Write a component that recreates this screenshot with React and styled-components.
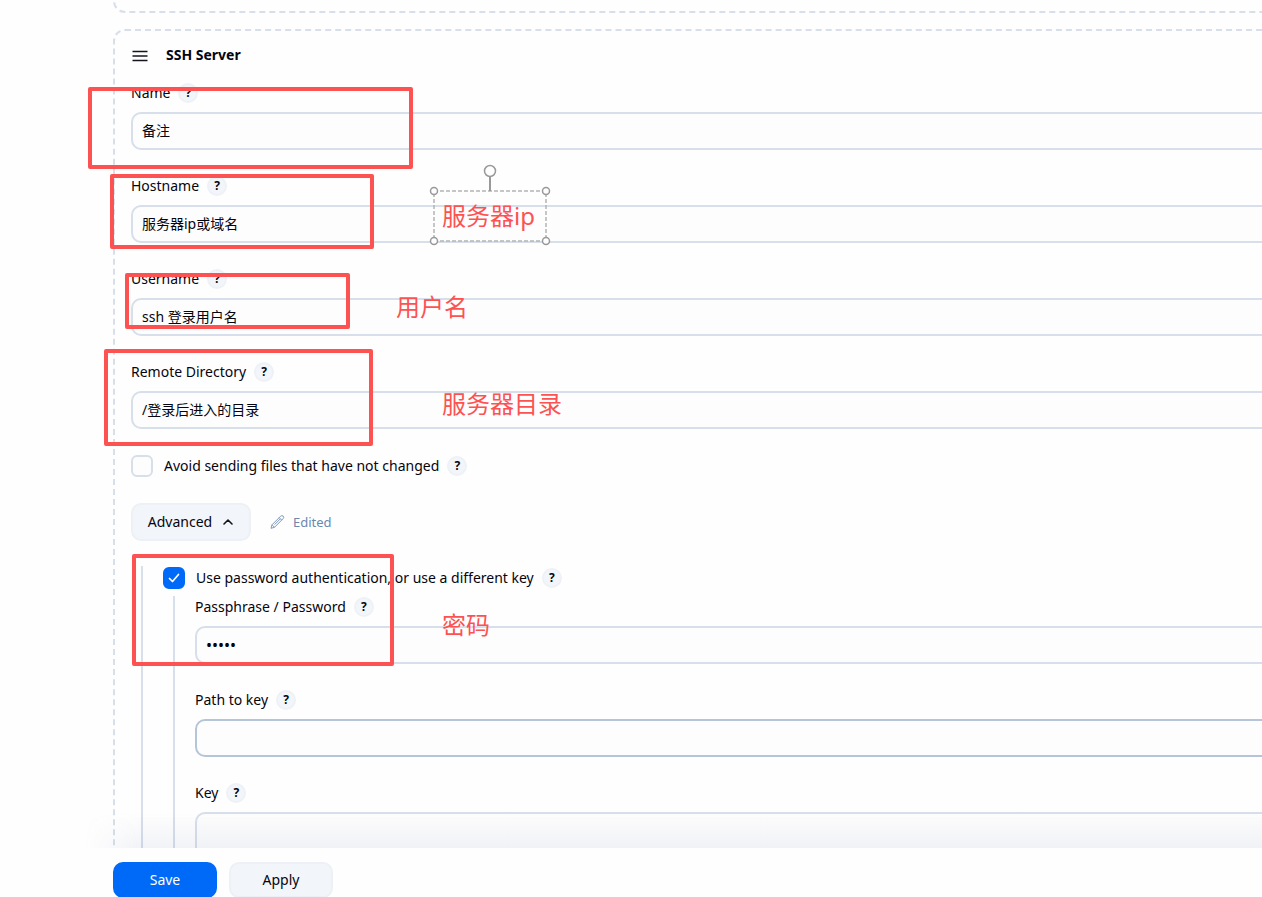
import React, { useState } from 'react';
import styled, { createGlobalStyle } from 'styled-components';

const GlobalStyle = createGlobalStyle`
  * {
    box-sizing: border-box;
  }
  body {
    margin: 0;
    background: #fefefe;
    color: #05050f;
    font-family: "Segoe UI", "Noto Sans", "Noto Sans CJK SC", sans-serif;
    font-size: 14px;
    line-height: 22px;
  }
  button, input, textarea {
    font: inherit;
    color: inherit;
  }
`

const Page = styled.div`
  position: relative;
  display: flex;
  flex-direction: column;
  height: 100vh;
  padding-left: 113px;
  overflow: hidden;
`

/* the form is wider than the window, so its right edge runs out of view */
const Content = styled.main`
  flex: 1;
  min-height: 0;
  margin-right: -40px;
`

const Chunk = styled.section`
  padding: 12px 16px;
  margin-bottom: 16px;
  border: 2px dashed #d6dfea;
  border-radius: 12px;
`

const PreviousChunk = styled(Chunk)`
  height: 60px;
  margin-top: -47px;
`

const ChunkHeader = styled.div`
  display: flex;
  align-items: center;
  gap: 17px;
  height: 24px;
  margin-bottom: 15px;
`

const ChunkTitle = styled.h2`
  margin: 0;
  font-size: 14px;
  font-weight: 700;
`

const DragHandle = styled.svg`
  width: 18px;
  height: 18px;
  fill: none;
  stroke: #14141f;
`

const Field = styled.div`
  margin-bottom: 25px;
`

const LabelRow = styled.div`
  display: flex;
  align-items: center;
  gap: 8px;
  height: 22px;
  margin-bottom: 8px;
`

const HelpButton = styled.button`
  display: grid;
  place-items: center;
  width: 20px;
  height: 20px;
  padding: 0;
  border: 2px solid #eef2f6;
  border-radius: 50%;
  background: #f2f5f9;
  font-size: 12px;
  font-weight: 700;
  line-height: 16px;
  cursor: pointer;
`

const TextInput = styled.input`
  display: block;
  width: 100%;
  height: 38px;
  padding: 0 9px 2px;
  border: 2px solid ${props => props.$active ? "#b6c4d8" : "#d6dfea"};
  border-radius: 10px;
  background: #fdfdfd;
  outline: none;
  &[type="password"] {
    padding-bottom: 0;
    font-size: 16px;
  }
`

const TextArea = styled.textarea`
  display: block;
  width: 100%;
  height: 120px;
  padding: 8px 10px;
  border: 2px solid #d6dfea;
  border-radius: 10px;
  background: #fdfdfd;
  outline: none;
  resize: none;
`

const CheckRow = styled.div`
  display: flex;
  align-items: center;
  gap: 8px;
  height: 24px;
  margin-bottom: ${props => props.$tight ? "6px" : "25px"};
`

const CheckLabel = styled.label`
  display: flex;
  align-items: center;
  gap: 11px;
`

const CheckMark = styled.span`
  display: grid;
  width: 22px;
  height: 22px;
  & > * {
    grid-area: 1 / 1;
  }
  svg {
    place-self: center;
    width: 12px;
    height: 12px;
    fill: none;
    stroke: white;
    stroke-width: 1.7;
    stroke-linecap: round;
    stroke-linejoin: round;
    pointer-events: none;
  }
`

const CheckInput = styled.input`
  appearance: none;
  width: 22px;
  height: 22px;
  margin: 0;
  border: 2px solid #d6dfea;
  border-radius: 6px;
  background: #fdfdfd;
  &:checked {
    border-color: #006af8;
    background: #006af8;
  }
`

const AdvancedRow = styled.div`
  display: flex;
  align-items: center;
  gap: 18px;
  margin-bottom: 25px;
`

const Button = styled.button`
  display: flex;
  align-items: center;
  justify-content: center;
  gap: 10px;
  height: ${props => props.$bar ? "36px" : "38px"};
  width: ${props => props.$bar ? "104px" : "120px"};
  padding: 0;
  border: 2px solid ${props => props.$primary ? "#006af8" : "#edf1f5"};
  border-radius: 10px;
  background: ${props => props.$primary ? "#006af8" : "#f2f5f9"};
  color: ${props => props.$primary ? "white" : "#05050f"};
  cursor: pointer;
  svg {
    width: 12px;
    height: 12px;
    fill: none;
    stroke: #14141f;
    stroke-width: 1.6;
    stroke-linecap: round;
    stroke-linejoin: round;
  }
`

const Edited = styled.span`
  display: flex;
  align-items: center;
  gap: 8px;
  color: #6b88ae;
  font-size: 13px;
  svg {
    width: 16px;
    height: 16px;
    fill: none;
    stroke: #7f99bd;
    stroke-linejoin: round;
  }
`

const Nested = styled.div`
  margin-left: 10px;
  padding-left: 20px;
  border-left: 2px solid #d6dfea;
`

const BottomBar = styled.footer`
  position: relative;
  display: flex;
  flex: none;
  gap: 12px;
  padding-top: 14px;
  margin-bottom: -1px;
  background: #fefefe;
  &::before {
    content: "";
    position: absolute;
    bottom: 100%;
    left: -28px;
    right: 0;
    height: 36px;
    background: linear-gradient(to top, rgba(100, 115, 165, 0.08), rgba(100, 115, 165, 0));
    mask-image: linear-gradient(to right, transparent, black 56px);
    pointer-events: none;
  }
`

const Markup = styled.div`
  position: absolute;
  inset: 0;
  pointer-events: none;
`

const RedBox = styled.div`
  position: absolute;
  left: ${props => props.$x}px;
  top: ${props => props.$y}px;
  width: ${props => props.$w}px;
  height: ${props => props.$h}px;
  border: 4px solid #fd5252;
  border-radius: 2px;
`

const RedNote = styled.span`
  position: absolute;
  left: ${props => props.$x}px;
  top: ${props => props.$y}px;
  color: #fd5252;
  font-size: 24px;
  line-height: 32px;
  white-space: nowrap;
`

const Selection = styled.svg`
  position: absolute;
  left: 428px;
  top: 163px;
  width: 124px;
  height: 84px;
  fill: none;
  stroke: #999;
`

const boxes = [
  { x: 88, y: 87, w: 325, h: 82 },
  { x: 110, y: 174, w: 264, h: 75 },
  { x: 125, y: 273, w: 225, h: 56 },
  { x: 104, y: 349, w: 269, h: 97 },
  { x: 132, y: 554, w: 262, h: 112 },
];

const notes = [
  { x: 442, y: 200, text: '服务器ip' },
  { x: 396, y: 291, text: '用户名' },
  { x: 442, y: 388, text: '服务器目录' },
  { x: 442, y: 609, text: '密码' },
];

const Help = ({ topic }) => (
  <HelpButton type="button" aria-label={`Help for ${topic}`}>?</HelpButton>
);

const LabelledField = ({ id, label, children }) => (
  <Field>
    <LabelRow>
      <label htmlFor={id}>{label}</label>
      <Help topic={label} />
    </LabelRow>
    {children}
  </Field>
);

const Check = ({ label, checked, onChange, tight }) => (
  <CheckRow $tight={tight}>
    <CheckLabel>
      <CheckMark>
        <CheckInput type="checkbox" checked={checked} onChange={onChange} />
        {checked && <svg viewBox="0 0 12 12"><path d="M1.5 6.5 4.5 9.5 10.5 2.5" /></svg>}
      </CheckMark>
      {label}
    </CheckLabel>
    <Help topic={label} />
  </CheckRow>
);

const App = () => {
  const [avoid, setAvoid] = useState(false);
  const [usePassword, setUsePassword] = useState(true);
  const [open, setOpen] = useState(true);

  return (
    <Page>
      <GlobalStyle />
      <Content>
        <PreviousChunk />
        <Chunk>
          <ChunkHeader>
            <DragHandle viewBox="0 0 18 18">
              <path d="M1.5 5.5H16.5M1.5 14.5H16.5" strokeWidth="1.3" />
              <path d="M1.5 10H16.5" strokeWidth="2" strokeOpacity="0.75" />
            </DragHandle>
            <ChunkTitle>SSH Server</ChunkTitle>
          </ChunkHeader>

          <LabelledField id="name" label="Name">
            <TextInput id="name" defaultValue="备注" />
          </LabelledField>
          <LabelledField id="hostname" label="Hostname">
            <TextInput id="hostname" defaultValue="服务器ip或域名" />
          </LabelledField>
          <LabelledField id="username" label="Username">
            <TextInput id="username" defaultValue="ssh 登录用户名" />
          </LabelledField>
          <LabelledField id="remote" label="Remote Directory">
            <TextInput id="remote" defaultValue="/登录后进入的目录" />
          </LabelledField>

          <Check
            label="Avoid sending files that have not changed"
            checked={avoid}
            onChange={() => setAvoid(!avoid)}
          />

          <AdvancedRow>
            <Button type="button" aria-expanded={open} onClick={() => setOpen(!open)}>
              Advanced
              <svg viewBox="0 0 12 12"><path d="M2 8 6 4 10 8" /></svg>
            </Button>
            <Edited>
              <svg viewBox="0 0 16 16">
                <path d="M2 14.3 3 10.8 11.6 2.2Q12.9 1 14.2 2.1 15.3 3.4 14.1 4.7L5.5 13.3Z" />
                <path d="M10.2 3.6 12.7 6.1M3 10.8 5.5 13.3M11.4 4.8 5.6 10.6" />
              </svg>
              Edited
            </Edited>
          </AdvancedRow>

          {open && (
            <Nested>
              <Check
                tight
                label="Use password authentication, or use a different key"
                checked={usePassword}
                onChange={() => setUsePassword(!usePassword)}
              />
              <Nested>
                <LabelledField id="password" label="Passphrase / Password">
                  <TextInput id="password" type="password" defaultValue="12345" />
                </LabelledField>
                <LabelledField id="path" label="Path to key">
                  <TextInput id="path" $active />
                </LabelledField>
                <LabelledField id="key" label="Key">
                  <TextArea id="key" />
                </LabelledField>
              </Nested>
            </Nested>
          )}
        </Chunk>
      </Content>

      <BottomBar>
        <Button type="submit" $bar $primary>Save</Button>
        <Button type="button" $bar>Apply</Button>
      </BottomBar>

      <Markup>
        {boxes.map(b => <RedBox key={b.y} $x={b.x} $y={b.y} $w={b.w} $h={b.h} />)}
        {notes.map(n => <RedNote key={n.y} $x={n.x} $y={n.y}>{n.text}</RedNote>)}
        <Selection viewBox="0 0 124 84">
          <rect x="6" y="28" width="112" height="50" strokeWidth="1.5" strokeDasharray="4 2" stroke="#b4b4b4" />
          <path d="M62 14V28" strokeWidth="2" />
          <g fill="white" strokeWidth="1.5">
            <circle cx="62" cy="8" r="5.5" />
            <circle cx="6" cy="28" r="3.5" />
            <circle cx="118" cy="28" r="3.5" />
            <circle cx="6" cy="78" r="3.5" />
            <circle cx="118" cy="78" r="3.5" />
          </g>
        </Selection>
      </Markup>
    </Page>
  );
};

export default App;
